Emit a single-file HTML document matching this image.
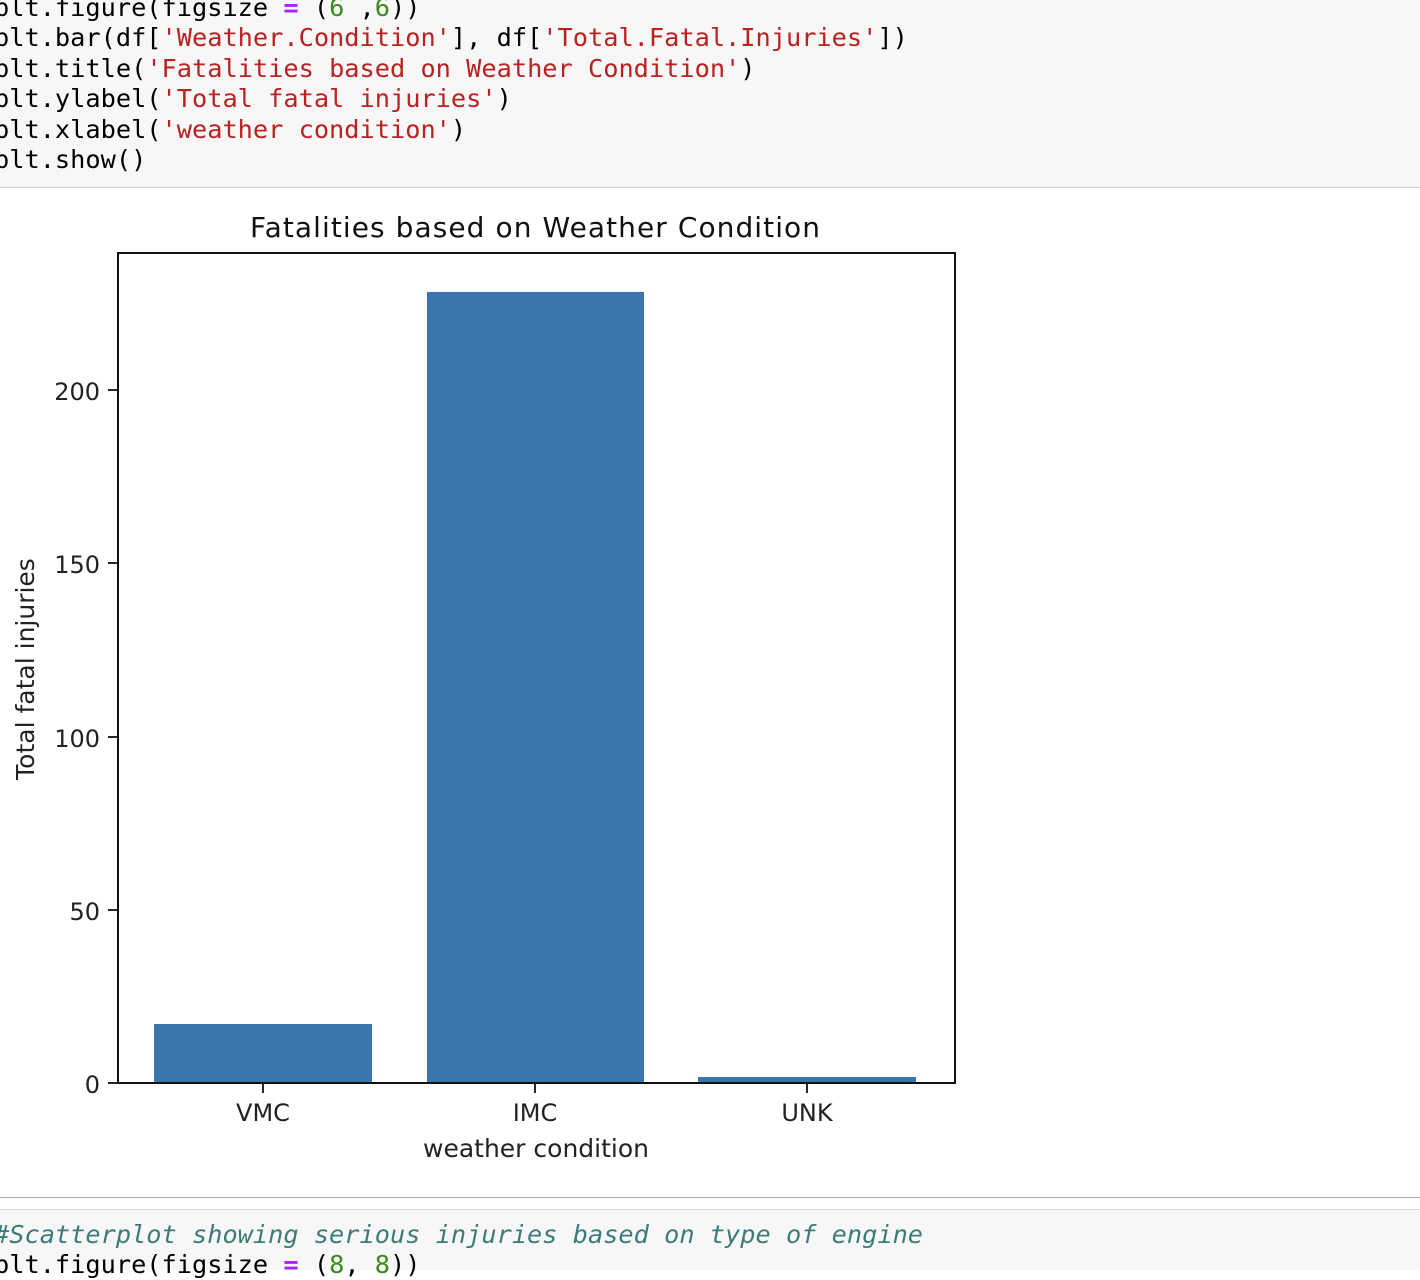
<!DOCTYPE html>
<html><head><meta charset="utf-8"><style>
html,body{margin:0;padding:0;width:1420px;height:1268px;overflow:hidden;background:#fff;}
.code{position:absolute;left:0;width:1420px;background:#f7f7f7;font-family:"DejaVu Sans Mono","Liberation Mono",monospace;font-size:25.3px;white-space:pre;color:#000;}
.l{position:absolute;left:-6px;height:30px;line-height:30px;}
.s{color:#ba2121}.n{color:#3a8a1e}.o{color:#aa22ff;font-weight:bold}.c{color:#3d7b7b;font-style:italic}
</style></head><body>
<div class="code" style="top:0;height:187px;border-bottom:1.5px solid #ccc;">
<div class="l" style="top:-7px">plt.figure(figsize <span class="o">=</span> (<span class="n">6</span> ,<span class="n">6</span>))</div>
<div class="l" style="top:23px">plt.bar(df[<span class="s">'Weather.Condition'</span>], df[<span class="s">'Total.Fatal.Injuries'</span>])</div>
<div class="l" style="top:54px">plt.title(<span class="s">'Fatalities based on Weather Condition'</span>)</div>
<div class="l" style="top:84px">plt.ylabel(<span class="s">'Total fatal injuries'</span>)</div>
<div class="l" style="top:115px">plt.xlabel(<span class="s">'weather condition'</span>)</div>
<div class="l" style="top:145px">plt.show()</div>
</div>
<svg style="position:absolute;left:0;top:0" width="1420" height="1268" font-family="DejaVu Sans, Liberation Sans, sans-serif" fill="#222">
<text x="535" y="237" font-size="28" text-anchor="middle" textLength="570" fill="#111">Fatalities based on Weather Condition</text>
<rect x="154" y="1024" width="218" height="59" fill="#3a76ae"/>
<rect x="427" y="292" width="217" height="791" fill="#3a76ae"/>
<rect x="698" y="1077" width="218" height="6" fill="#3a76ae"/>
<rect x="118" y="253" width="837" height="830" fill="none" stroke="#111" stroke-width="2"/>
<g stroke="#111" stroke-width="1.8">
<line x1="108" y1="1083" x2="118" y2="1083"/><line x1="108" y1="910" x2="118" y2="910"/>
<line x1="108" y1="737" x2="118" y2="737"/><line x1="108" y1="563" x2="118" y2="563"/>
<line x1="108" y1="390" x2="118" y2="390"/>
<line x1="263" y1="1083" x2="263" y2="1093"/><line x1="535" y1="1083" x2="535" y2="1093"/><line x1="807" y1="1083" x2="807" y2="1093"/>
</g>
<g font-size="24" text-anchor="end">
<text x="100" y="1093">0</text><text x="100" y="920">50</text><text x="100" y="747">100</text>
<text x="100" y="573">150</text><text x="100" y="400">200</text>
</g>
<g font-size="24" text-anchor="middle">
<text x="263" y="1121">VMC</text><text x="535" y="1121">IMC</text><text x="807" y="1121">UNK</text>
<text x="536" y="1157" font-size="25">weather condition</text>
</g>
<text transform="translate(34,669) rotate(-90)" font-size="25" text-anchor="middle">Total fatal injuries</text>
</svg>
<div style="position:absolute;left:0;top:1197px;width:1420px;border-top:1.5px solid #aaa;"></div>
<div class="code" style="top:1209px;height:60px;border-top:1.5px solid #ddd;">
<div class="l" style="top:10px"><span class="c">#Scatterplot showing serious injuries based on type of engine</span></div>
<div class="l" style="top:40px">plt.figure(figsize <span class="o">=</span> (<span class="n">8</span>, <span class="n">8</span>))</div>
</div>
</body></html>
